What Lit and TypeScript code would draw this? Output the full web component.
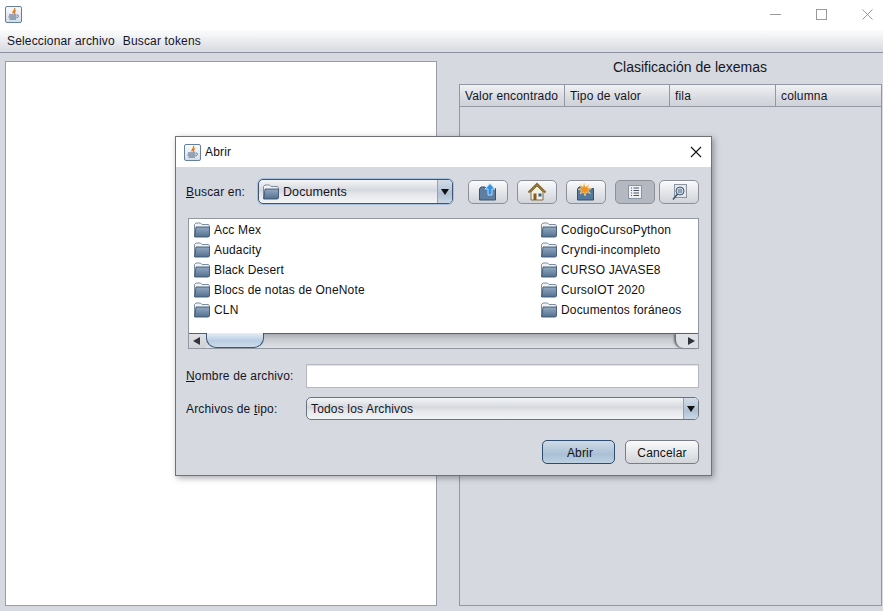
import { LitElement, html, css, svg } from "lit";
import { customElement } from "lit/decorators.js";

const folder = () => html`<svg class="fi" width="16" height="16" viewBox="0 0 16 16">
  <defs><linearGradient id="fg" x1="0" y1="0" x2="0" y2="1"><stop offset="0" stop-color="#93a9c2"/><stop offset="1" stop-color="#52708f"/></linearGradient></defs>
  <path d="M.5 14.500V2.500L2 1h4.500L8 2.500h6.500l1 1.500v2H3z" fill="#f0f2f5" stroke="#6f8196" stroke-width=".9"/>
  <path d="M.7 15 2 5h13.500v9l-1 1z" fill="url(#fg)" stroke="#3d566f" stroke-width=".9"/>
</svg>`;

const java = () => html`<svg width="17" height="17" viewBox="0 0 17 17">
  <defs><linearGradient id="jg" x1="0" y1="0" x2="0" y2="1"><stop offset="0" stop-color="#fafbfc"/><stop offset="1" stop-color="#d3dce6"/></linearGradient></defs>
  <rect x=".5" y=".5" width="16" height="16" rx="1.500" fill="url(#jg)" stroke="#65809e"/>
  <path d="M9.500 2C11 4 7 5 8 7.500M11 4.500C9 5.500 9 6.500 10 8" fill="none" stroke="#e2761c" stroke-width="1.300"/>
  <path d="M4 9h7.500M3.500 11h8M4.500 13h6.500" stroke="#46607e" stroke-width="1"/>
  <path d="M12 9c2.500 0 1.500 2.500-.5 3" fill="none" stroke="#46607e" stroke-width=".8"/>
</svg>`;

const icons = [
  svg`<path d="M1.500 18V7L3 5h4l1.500 1.500h9V18z" fill="#5f7fa2" stroke="#3a526c"/><path d="M12 1.500 7 7h3v6h4V7h3z" fill="#2e94e6" stroke="#dcecfa" stroke-width=".8"/>`,
  svg`<path d="M1.500 10.500 10 2l8.500 8.500" fill="none" stroke="#8a6a2c" stroke-width="2"/><path d="M4 10 10 4l6 6v8H4z" fill="#f4f0e0" stroke="#7d6c42"/><rect x="6.500" y="11.500" width="3" height="6.500" fill="#8a5a22"/><rect x="11.500" y="11.500" width="3" height="3" fill="#2f5f96"/>`,
  svg`<path d="M1.500 18V7L3 5h4l1.500 1.500h9V18z" fill="#54779c" stroke="#34506d"/><path d="M8 1 9.500 5l3.500-2.500L11.500 6l4 .5L12 8.500l2.500 3-4-1.500L9 14l-1.500-4L4 12l1.500-3.500L2 7.500l3.500-1.500L4 2.500 7 5z" fill="#f2921f" stroke="#ffe2a0" stroke-width=".6"/>`,
];

@customElement("app-root")
export class AppRoot extends LitElement {
  static styles = css`
    :host { display: block; width: 883px; height: 611px; position: relative; overflow: hidden; background: #d6d9df;
      font: 12px "Liberation Sans", Arial, sans-serif; letter-spacing: .16px; color: #15151f; }
    * { box-sizing: border-box; }
    u { text-decoration-thickness: 1px; }
    .titlebar { height: 30px; background: #fff; display: flex; align-items: center; padding: 0 5px; justify-content: space-between; }
    .titlebar > svg { margin-top: -2px; }
    .ctrls { display: flex; margin-right: 5px; gap: 35px; margin-top: -2px; }
    .ctrls svg { display: block; }
    .menubar { height: 23px; padding: 0 7px 1px; display: flex; gap: 8px; align-items: center;
      background: linear-gradient(#fbfbfc, #f4f5f6 25%, #d9dce2 90%); border-bottom: 1px solid #8e90a2; }
    .main { display: grid; grid-template-columns: 432px 423px; column-gap: 22px; padding: 8px 0 5px 5px; height: 558px; }
    .editor { background: #fff; border: 1px solid #9a9caa; height: 545px; }
    .right { display: flex; flex-direction: column; height: 545px; }
    .caption { height: 23px; font-size: 14px; letter-spacing: 0; text-align: center; line-height: 12px; padding-left: 39px; }
    .table { flex: 1; border: 1px solid #9297a1; }
    .thead { display: grid; grid-template-columns: 105px 105px 106px 1fr; height: 22px; border-bottom: 1px solid #9297a1;
      background: linear-gradient(#f0f1f3, #d9dbe1 60%, #cfd2d9); }
    .thead div { padding: 0 5px; line-height: 22px; border-right: 1px solid #9297a1; }
    .thead div:last-child { border-right: 0; }

    .dialog { position: absolute; left: 175px; top: 136px; width: 537px; height: 340px; background: #d6d9df;
      border: 1px solid #6f7278; box-shadow: 2px 2px 6px rgba(60,60,70,.45); display: flex; flex-direction: column; }
    .dtitle { height: 30px; background: #fff; display: flex; align-items: center; padding: 0 9px 0 8px; gap: 4px; color: #111; }
    .dtitle span { flex: 1; }
    .dbody { flex: 1; padding: 12px 12px 11px 10px; display: flex; flex-direction: column; }
    .top { display: flex; align-items: center; height: 25px; }
    .top label { width: 72px; }
    .combo { border: 1px solid #3a5674; border-radius: 5px; display: flex; align-items: center; background: linear-gradient(#f4f5f7, #d5d8de 45%, #e4e6ea 60%, #f3f4f6); }
    .c1 { width: 195px; height: 25px; padding-left: 4px; gap: 4px; box-shadow: 0 0 0 1px #a8c0dc; font-size: 12.5px; letter-spacing: .08px; }
    .arrow { margin-left: auto; width: 15px; align-self: stretch; border-left: 1px solid #8da3bc; border-radius: 0 4px 4px 0;
      background: linear-gradient(#d4dde7, #afc1d5 60%, #cbd7e4); display: flex; align-items: center; justify-content: center; }
    .arrow i { border: 4px solid transparent; border-top: 6px solid #111; border-bottom: 0; }
    .tools { display: flex; margin-left: 15px; gap: 9px; }
    .tb { width: 40px; height: 24px; border: 1px solid #8d9098; border-radius: 5px; display: flex; align-items: center; justify-content: center;
      background: linear-gradient(#fbfbfc, #e4e6ea 50%, #d0d3d9); }
    .tb.on { background: #b4b8c0; }
    .tb.last { margin-left: -5px; }
    .list { margin: 14px 0 0 2px; width: 511px; height: 131px; border: 1px solid #9297a1; display: flex; flex-direction: column; }
    .files { height: 115px; background: #fff; display: flex; justify-content: space-between; padding: 1px 0 0 5px; border-bottom: 1px solid #5d6068; position: relative; }
    .col { width: 347px; }
    .col:last-child { width: 157px; }
    .file { height: 20px; display: flex; align-items: center; gap: 4px; color: #111; }
    .sb { flex: 1; position: relative; background: linear-gradient(#a9abb2, #c8cad0 35%, #dde0e5); display: flex; align-items: center; justify-content: space-between; padding: 0 3px 0 4px; }
    .sb i { border: 4px solid transparent; position: relative; z-index: 1; }
    .sb .l { border-right: 7px solid #33333c; border-left: 0; }
    .sb .r { border-left: 7px solid #33333c; border-right: 0; }
    .lcap { position: absolute; left: 0; top: 0; width: 17px; height: 100%; background: linear-gradient(#dfe1e6, #cfd2d8); }
    .rcap { position: absolute; right: 0; top: 0; width: 22px; height: 100%; background: #dde0e5; border-radius: 0 0 0 8px; box-shadow: -2px 0 2px #6a6c74; }
    .thumb { position: absolute; left: 17px; top: -1px; width: 58px; height: 15px; border: 1px solid #3a5672; border-top: 0; border-radius: 0 0 10px 10px;
      background: linear-gradient(#e8eef5, #b9cde1 55%, #cddcea); }
    .row { display: flex; align-items: center; margin-top: 15px; }
    .row label { width: 120px; }
    .input { width: 393px; height: 24px; background: #fff; border: 1px solid #b5b8bf; box-shadow: inset 0 1px 1px #e0e0e0; }
    .row.second { margin-top: 9px; }
    .c2 { width: 393px; height: 23px; padding-left: 4px; border-color: #6b7280; }
    .actions { margin-top: auto; display: flex; justify-content: flex-end; gap: 10px; }
    .btn { height: 24px; border: 1px solid #777c85; border-radius: 5px; display: flex; align-items: center; justify-content: center; color: #111; padding-top: 1px;
      background: linear-gradient(#fbfbfc, #e6e7ea 50%, #d2d5da); }
    .b1 { width: 73px; padding-left: 3px; border-color: #2f4c6e; background: linear-gradient(#cfdbe7, #aac0d5 60%, #bcd0e2); }
    .b2 { width: 74px; }
  `;

  render() {
    const a = ["Acc Mex", "Audacity", "Black Desert", "Blocs de notas de OneNote", "CLN"];
    const b = ["CodigoCursoPython", "Cryndi-incompleto", "CURSO JAVASE8", "CursoIOT 2020", "Documentos foráneos"];
    const col = (l: string[]) => html`<div class="col">${l.map((t) => html`<div class="file">${folder()}<span>${t}</span></div>`)}</div>`;
    return html`
      <div class="titlebar">${java()}
        <div class="ctrls">
          <svg width="11" height="11" viewBox="0 0 11 11"><path d="M0 5.500h11" stroke="#9a9a9a"/></svg>
          <svg width="11" height="11" viewBox="0 0 11 11"><rect x=".5" y=".5" width="10" height="10" fill="none" stroke="#9a9a9a"/></svg>
          <svg width="11" height="11" viewBox="0 0 11 11"><path d="M.5.5l10 10M10.500.5l-10 10" stroke="#9a9a9a"/></svg>
        </div>
      </div>
      <div class="menubar"><span>Seleccionar archivo</span><span>Buscar tokens</span></div>
      <div class="main">
        <div class="editor"></div>
        <div class="right">
          <div class="caption">Clasificación de lexemas</div>
          <div class="table"><div class="thead"><div>Valor encontrado</div><div>Tipo de valor</div><div>fila</div><div>columna</div></div></div>
        </div>
      </div>
      <div class="dialog">
        <div class="dtitle">${java()}<span>Abrir</span>
          <svg width="12" height="12" viewBox="0 0 12 12"><path d="M1 1l10 10M11 1 1 11" stroke="#111" stroke-width="1.100"/></svg>
        </div>
        <div class="dbody">
          <div class="top">
            <label><u>B</u>uscar en:</label>
            <div class="combo c1">${folder()}<span>Documents</span><div class="arrow"><i></i></div></div>
            <div class="tools">
              ${icons.map((p) => html`<div class="tb"><svg width="20" height="20" viewBox="0 0 20 20">${p}</svg></div>`)}
              <div class="tb on"><svg width="16" height="16" viewBox="0 0 16 16"><rect x="1.500" y="1.500" width="13" height="13" fill="#eef0f3" stroke="#8a93a0"/><path d="M4 4h1M6.500 4H12M4 6.500h1M6.500 6.500H12M4 9h1M6.500 9H12M4 11.500h1M6.500 11.500H12" stroke="#4a5564"/></svg></div>
              <div class="tb last"><svg width="18" height="18" viewBox="0 0 18 18"><rect x="4.500" y="1.500" width="12" height="13" fill="#e4e7eb" stroke="#8a93a0"/><circle cx="10" cy="8" r="4" fill="#c7d5e4" stroke="#44586f"/><path d="M7.500 11 3 16.500" stroke="#44586f" stroke-width="1.600"/><path d="M8 7h4M8 9h4" stroke="#44586f" stroke-width=".8"/></svg></div>
            </div>
          </div>
          <div class="list">
            <div class="files">${col(a)}${col(b)}</div>
            <div class="sb"><div class="lcap"></div><div class="rcap"></div><i class="l"></i><div class="thumb"></div><i class="r"></i></div>
          </div>
          <div class="row"><label><u>N</u>ombre de archivo:</label><div class="input"></div></div>
          <div class="row second"><label>Archivos de <u>t</u>ipo:</label>
            <div class="combo c2"><span>Todos los Archivos</span><div class="arrow"><i></i></div></div></div>
          <div class="actions"><div class="btn b1">Abrir</div><div class="btn b2">Cancelar</div></div>
        </div>
      </div>`;
  }
}
